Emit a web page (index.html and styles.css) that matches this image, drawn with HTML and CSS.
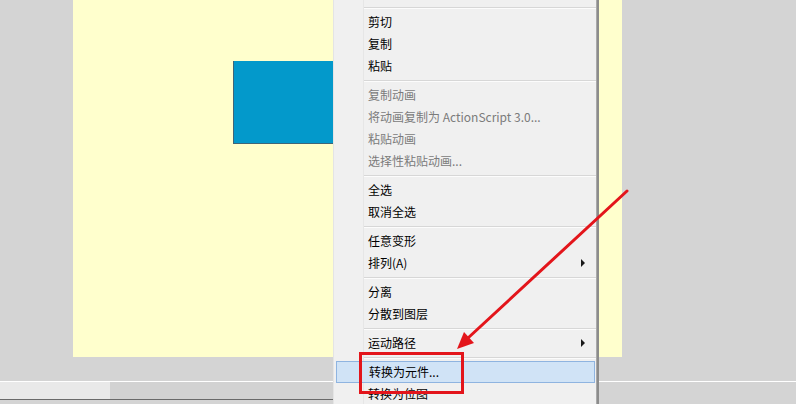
FILE: index.html
```html
<!DOCTYPE html>
<html lang="zh-CN">
<head>
<meta charset="utf-8">
<title>Context menu</title>
<link rel="stylesheet" href="styles.css">
</head>
<body>
<div class="workspace">
  <div class="stage-row">
    <div class="stage">
      <div class="shape"></div>
    </div>
  </div>
  <div class="hscroll">
    <div class="track-left"></div>
    <div class="thumb"></div>
  </div>
  <div class="hscroll-bottom"></div>
</div>

<div class="menu">
  <div class="spacer"></div>
  <div class="sep"></div>
  <div class="item">剪切</div>
  <div class="item">复制</div>
  <div class="item">粘贴</div>
  <div class="sep"></div>
  <div class="item disabled">复制动画</div>
  <div class="item disabled">将动画复制为 ActionScript 3.0...</div>
  <div class="item disabled">粘贴动画</div>
  <div class="item disabled">选择性粘贴动画...</div>
  <div class="sep"></div>
  <div class="item">全选</div>
  <div class="item">取消全选</div>
  <div class="sep"></div>
  <div class="item">任意变形</div>
  <div class="item sub">排列(A)<span class="caret"></span></div>
  <div class="sep"></div>
  <div class="item">分离</div>
  <div class="item">分散到图层</div>
  <div class="sep"></div>
  <div class="item sub">运动路径<span class="caret"></span></div>
  <div class="sep"></div>
  <div class="item active">转换为元件...</div>
  <div class="item">转换为位图</div>
</div>

<div class="redbox"></div>
<svg class="arrow" width="796" height="404" viewBox="0 0 796 404">
  <line x1="627" y1="191" x2="468" y2="338" stroke="#e3151b" stroke-width="3" stroke-linecap="round"/>
  <polygon points="457,349 474,343 464,332" fill="#e3151b"/>
</svg>
</body>
</html>
```

FILE: styles.css
```css
html, body {
  margin: 0;
  padding: 0;
}
body {
  width: 796px;
  height: 404px;
  overflow: hidden;
  background: #d4d4d4;
  position: relative;
  font-family: "Noto Sans CJK SC", "Microsoft YaHei", sans-serif;
  font-size: 12px;
}
.workspace {
  display: flex;
  flex-direction: column;
}
.stage-row {
  display: flex;
  padding-left: 73px;
  height: 357px;
}
.stage {
  width: 549px;
  height: 357px;
  background: #ffffcd;
  position: relative;
}
.shape {
  position: absolute;
  left: 160px;
  top: 61px;
  width: 120px;
  height: 83px;
  box-sizing: border-box;
  background: #0399cb;
  border-left: 1px solid #3f6577;
  border-bottom: 1px solid #3f6577;
}
.hscroll {
  margin-top: 24px;
  height: 17px;
  display: flex;
  border-top: 1px solid #ffffff;
}
.track-left {
  width: 110px;
  background: #e9e9e9;
}
.thumb {
  width: 486px;
  background: #d2d2d2;
}
.hscroll-bottom {
  height: 1px;
  background: #6a6a6a;
  width: 598px;
}

.menu {
  position: absolute;
  left: 333px;
  top: 0;
  width: 262px;
  height: 404px;
  background: #f0f0f0;
  border-left: 1px solid #e4e4e4;
  border-right: 1px solid #a9a9a9;
  box-shadow: 2px 0 0 #8c8c8c;
  display: flex;
  flex-direction: column;
}
.menu::before {
  content: "";
  position: absolute;
  left: 29px;
  top: 0;
  bottom: 0;
  width: 1px;
  background: #e6e6e6;
}
.spacer {
  height: 4px;
  flex: none;
}
.sep {
  height: 7px;
  flex: none;
  margin-left: 29px;
  display: flex;
  flex-direction: column;
  justify-content: center;
}
.sep::before {
  content: "";
  height: 1px;
  background: #d7d7d7;
  border-bottom: 1px solid #fcfcfc;
}
.item {
  height: 22px;
  flex: none;
  display: flex;
  align-items: center;
  padding-left: 34px;
  color: #000;
  position: relative;
  line-height: 22px;
  box-sizing: border-box;
}
.item.disabled {
  color: #7b7b7b;
}
.item.active {
  margin: 0 1px 0 2px;
  padding-left: 32px;
  background: #d0e3f6;
  border: 1px solid #8fb4e0;
}
.caret {
  position: absolute;
  right: 11px;
  top: 7px;
  width: 0;
  height: 0;
  border-top: 4px solid transparent;
  border-bottom: 4px solid transparent;
  border-left: 4px solid #1a1a1a;
}
.redbox {
  position: absolute;
  left: 359px;
  top: 352px;
  width: 105px;
  height: 42px;
  box-sizing: border-box;
  border: 3px solid #e3151b;
}
.arrow {
  position: absolute;
  left: 0;
  top: 0;
  pointer-events: none;
}
```
